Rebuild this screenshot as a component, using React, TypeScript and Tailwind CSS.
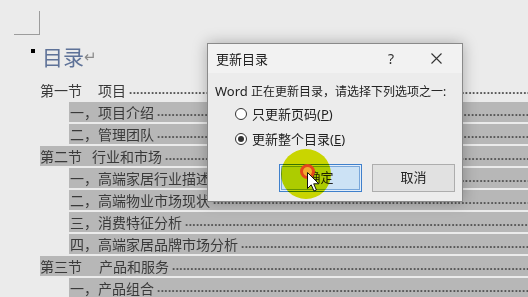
import React from "react";

const DOTS = ".".repeat(200);

type Row = {
  indent: "sec" | "sub";
  head: string;
  gap?: string;
  tail?: string;
  hl: boolean;
};

const rows: Row[] = [
  { indent: "sec", head: "第一节", gap: "ml-[16px]", tail: "项目", hl: false },
  { indent: "sub", head: "一，项目介绍", hl: true },
  { indent: "sub", head: "二，管理团队", hl: true },
  { indent: "sec", head: "第二节", gap: "ml-[10px]", tail: "行业和市场", hl: true },
  { indent: "sub", head: "一，高端家居行业描述", hl: true },
  { indent: "sub", head: "二，高端物业市场现状", hl: true },
  { indent: "sub", head: "三，消费特征分析", hl: true },
  { indent: "sub", head: "四，高端家居品牌市场分析", hl: true },
  { indent: "sec", head: "第三节", gap: "ml-[17px]", tail: "产品和服务", hl: true },
  { indent: "sub", head: "一，产品组合", hl: true },
];

function TocRow({ r }: { r: Row }) {
  return (
    <div
      className={
        "flex h-[20px] shrink-0 items-start overflow-hidden whitespace-nowrap text-[14px] leading-[20px] text-[#3a3a3a] " +
        (r.indent === "sec" ? "ml-[40px] " : "ml-[69px] ") +
        (r.hl ? "bg-[#b7b7b7]" : "")
      }
    >
      <span className={r.indent === "sub" ? "pl-[1px]" : ""}>{r.head}</span>
      {r.tail ? <span className={r.gap}>{r.tail}</span> : null}
      <span className="ml-[3px] min-w-0 flex-1 overflow-hidden font-['Liberation_Serif'] text-[13px] font-bold tracking-[0.4px] text-[#555]">
        {DOTS}
      </span>
    </div>
  );
}

function Radio({ checked }: { checked: boolean }) {
  return (
    <div className="flex h-[12px] w-[12px] items-center justify-center rounded-full border border-[#333] bg-white">
      {checked ? <div className="h-[6px] w-[6px] rounded-full bg-[#333]" /> : null}
    </div>
  );
}

export default function App() {
  return (
    <div className="relative h-[297px] w-[528px] overflow-hidden bg-[#ebebeb] font-['Noto_Sans_CJK_SC',sans-serif]">
      {/* corner mark */}
      <div className="ml-[14px] pt-[11px]">
        <div className="h-[24px] w-[26px] border-b border-r border-[#9c9c9c]" />
      </div>

      {/* heading */}
      <div className="ml-[31px] mt-[9px] flex h-[24px] items-start">
        <div className="mt-[5px] h-[4px] w-[4px] bg-black" />
        <span className="ml-[7px] text-[21px] leading-[24px] text-[#5e7298]">目录</span>
        <span className="mt-[2px] text-[15px] leading-[20px] text-[#8a8a8a]">↵</span>
      </div>

      {/* toc rows */}
      <div className="mt-[12px] flex flex-col gap-[2px]">
        {rows.map((r, i) => (
          <TocRow key={i} r={r} />
        ))}
      </div>

      {/* dialog */}
      <div className="absolute left-[207px] top-[43px] h-[159px] w-[256px] border border-[#8a8a8a] bg-[#ececec] font-['Noto_Sans','Noto_Sans_CJK_SC',sans-serif] text-[#222] shadow-[0_0_14px_rgba(0,0,0,0.28)]">
        {/* title bar */}
        <div className="flex h-[29px] items-center bg-[#f2f2f2] pl-[8px]">
          <span className="text-[13px] leading-[18px]">更新目录</span>
          <span className="ml-auto mr-[37px] text-[14px] leading-[18px] text-[#333]">?</span>
          <svg width="11" height="11" viewBox="0 0 11 11" className="mr-[20px]">
            <path d="M0.5 0.5 L10.5 10.5 M10.5 0.5 L0.5 10.5" stroke="#333" strokeWidth="1.1" />
          </svg>
        </div>
        {/* body */}
        <div className="flex flex-col px-[7px] pt-[9px]">
          <div className="h-[18px] whitespace-nowrap text-[12px] leading-[18px]">
            <span className="text-[13px]">Word</span> 正在更新目录，请选择下列选项之一:
          </div>
          <div className="ml-[20px] mt-[4px] flex h-[20px] items-center gap-[5px]">
            <Radio checked={false} />
            <span className="text-[13px] leading-[20px]">
              只更新页码(<span className="underline">P</span>)
            </span>
          </div>
          <div className="ml-[20px] mt-[5px] flex h-[20px] items-center gap-[5px]">
            <Radio checked={true} />
            <span className="text-[13px] leading-[20px]">
              更新整个目录(<span className="underline">E</span>)
            </span>
          </div>
          <div className="mt-[15px] flex justify-end gap-[10px]">
            <div className="flex h-[28px] w-[83px] items-center justify-center border border-[#3f80cc] bg-[#cce2f5] text-[13px] shadow-[inset_0_0_0_1px_#e4eef9,inset_0_0_0_2px_#78a6da]">
              确定
            </div>
            <div className="flex h-[28px] w-[83px] items-center justify-center border border-[#adadad] bg-[#e1e1e1] text-[13px]">
              取消
            </div>
          </div>
        </div>

        {/* cursor highlight */}
        <div className="absolute left-[73px] top-[105px] h-[50px] w-[50px] rounded-full bg-[#d9e600] mix-blend-multiply" />
        <div className="absolute left-[92px] top-[120px] h-[15px] w-[15px] rounded-full border-[3px] border-[#e4461c] bg-[#f1ad2e]" />
        <svg
          className="absolute left-[99px] top-[128px]"
          width="13"
          height="20"
          viewBox="0 0 13 20"
        >
          <path
            d="M0.5 0.5 L0.5 16.5 L4.2 12.8 L7 19 L9.4 18 L6.7 11.8 L11.8 11.8 Z"
            fill="#fff"
            stroke="#111"
            strokeWidth="1"
            strokeLinejoin="round"
          />
        </svg>
      </div>
    </div>
  );
}
